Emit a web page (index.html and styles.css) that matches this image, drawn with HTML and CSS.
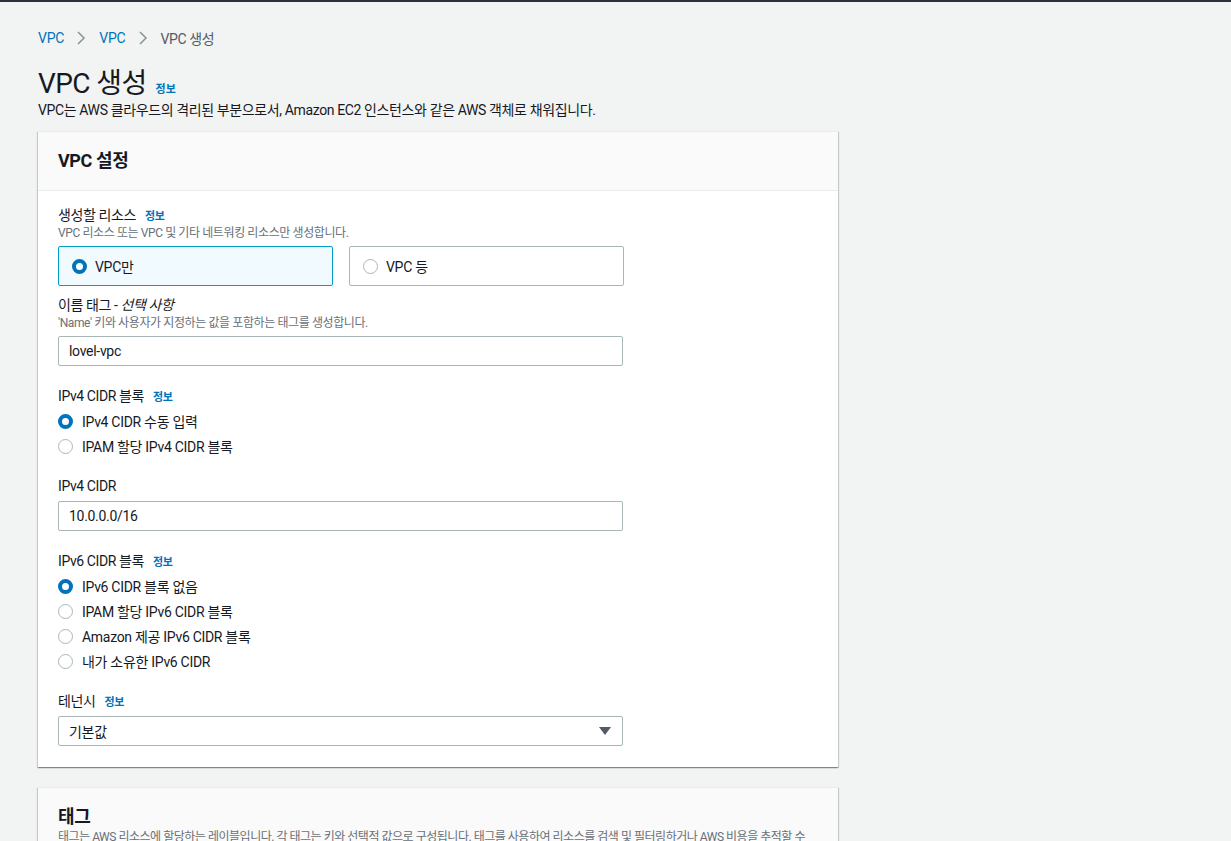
FILE: index.html
```html
<!DOCTYPE html>
<html lang="ko">
<head>
<meta charset="utf-8">
<title>VPC 생성</title>
<link rel="stylesheet" href="styles.css">
</head>
<body>
<div class="topbar"></div>
<main class="page">
  <nav class="crumbs">
    <a class="crumb-link">VPC</a>
    <svg class="chev" width="10" height="16" viewBox="0 0 10 16"><path d="M2 2l6 6-6 6" fill="none" stroke="#879596" stroke-width="1.5"/></svg>
    <a class="crumb-link">VPC</a>
    <svg class="chev" width="10" height="16" viewBox="0 0 10 16"><path d="M2 2l6 6-6 6" fill="none" stroke="#879596" stroke-width="1.5"/></svg>
    <span class="crumb-current">VPC 생성</span>
  </nav>
  <div class="title-row">
    <h1 class="title">VPC 생성</h1>
    <a class="info">정보</a>
  </div>
  <p class="page-desc">VPC는 AWS 클라우드의 격리된 부분으로서, Amazon EC2 인스턴스와 같은 AWS 객체로 채워집니다.</p>

  <section class="card">
    <div class="card-head"><h2 class="card-title">VPC 설정</h2></div>
    <div class="card-body">
      <div class="field field-first">
        <div class="label">생성할 리소스 <a class="info">정보</a></div>
        <div class="desc">VPC 리소스 또는 VPC 및 기타 네트워킹 리소스만 생성합니다.</div>
        <div class="tiles">
          <div class="tile tile-on"><span class="radio radio-on"></span><span>VPC만</span></div>
          <div class="tile"><span class="radio"></span><span>VPC 등</span></div>
        </div>
      </div>
      <div class="field field-tight">
        <div class="label">이름 태그 - <em>선택 사항</em></div>
        <div class="desc">'Name' 키와 사용자가 지정하는 값을 포함하는 태그를 생성합니다.</div>
        <div class="input">lovel-vpc</div>
      </div>
      <div class="field">
        <div class="label">IPv4 CIDR 블록 <a class="info">정보</a></div>
        <div class="radios">
          <div class="opt"><span class="radio radio-on"></span><span>IPv4 CIDR 수동 입력</span></div>
          <div class="opt"><span class="radio"></span><span>IPAM 할당 IPv4 CIDR 블록</span></div>
        </div>
      </div>
      <div class="field">
        <div class="label">IPv4 CIDR</div>
        <div class="input">10.0.0.0/16</div>
      </div>
      <div class="field">
        <div class="label">IPv6 CIDR 블록 <a class="info">정보</a></div>
        <div class="radios">
          <div class="opt"><span class="radio radio-on"></span><span>IPv6 CIDR 블록 없음</span></div>
          <div class="opt"><span class="radio"></span><span>IPAM 할당 IPv6 CIDR 블록</span></div>
          <div class="opt"><span class="radio"></span><span>Amazon 제공 IPv6 CIDR 블록</span></div>
          <div class="opt"><span class="radio"></span><span>내가 소유한 IPv6 CIDR</span></div>
        </div>
      </div>
      <div class="field">
        <div class="label">테넌시 <a class="info">정보</a></div>
        <div class="input select"><span>기본값</span>
          <svg class="caret" width="12" height="8" viewBox="0 0 12 8"><path d="M0 0h12L6 8z" fill="#545b64"/></svg>
        </div>
      </div>
    </div>
  </section>

  <section class="card card-tags">
    <div class="card-head2">
      <h2 class="card-title">태그</h2>
      <div class="desc tag-desc">태그는 AWS 리소스에 할당하는 레이블입니다. 각 태그는 키와 선택적 값으로 구성됩니다. 태그를 사용하여 리소스를 검색 및 필터링하거나 AWS 비용을 추적할 수 있습니다.</div>
    </div>
  </section>
</main>
</body>
</html>
```
FILE: styles.css
```css
* { box-sizing: border-box; }
html, body { margin: 0; padding: 0; }
body {
  background: #f2f3f3;
  color: #16191f;
  font-family: Roboto, "Noto Sans CJK KR", sans-serif;
  font-size: 14px;
  overflow: hidden;
  height: 841px;
}
.topbar { height: 2px; background: #2a323d; }
.page { padding: 0 0 0 38px; width: 838px; box-sizing: content-box; }
.crumbs { display: flex; align-items: center; height: 20px; margin-top: 26px; }
.crumb-link { color: #0073bb; letter-spacing: -0.2px; }
.chev { margin: 0 13px 0 12px; }
.crumb-current { color: #545b64; letter-spacing: -0.4px; }
.title-row { display: flex; align-items: baseline; margin-top: 21px; height: 30px; }
.title { font-size: 28px; font-weight: 400; margin: 0; line-height: 30px; letter-spacing: -0.6px; }
.info { color: #0073bb; font-size: 11px; font-weight: 700; margin-left: 9px; line-height: 1; }
.page-desc { margin: 0; margin-top: 1px; line-height: 20px; letter-spacing: -0.38px; }
.card {
  margin-top: 11px;
  width: 800px;
  background: #fff;
  border-top: 1px solid #eaeded;
  box-shadow: 0 1px 1px 0 rgba(0,28,36,.3), 1px 1px 1px 0 rgba(0,28,36,.15), -1px 1px 1px 0 rgba(0,28,36,.15);
}
.card-head { background: #fafafa; border-bottom: 1px solid #eaeded; padding: 19px 20px 19px; }
.card-title { margin: 0; font-size: 18px; font-weight: 700; line-height: 20px; letter-spacing: -0.4px; }
.card-body { padding: 14px 20px 21px; }
.field { margin-top: 20px; }
.field-first { margin-top: 0; }
.field-tight { margin-top: 9px; }
.label { line-height: 20px; letter-spacing: -0.4px; }
.label .info { margin-left: 6px; }
.label em { font-style: italic; }
.desc { font-size: 12px; line-height: 16px; color: #687078; letter-spacing: -0.4px; }
.tiles { display: flex; gap: 16px; margin-top: 5px; }
.tile {
  width: 275px; height: 40px;
  border: 1px solid #aab7b8; border-radius: 2px;
  display: flex; align-items: center; gap: 8px; padding-left: 13px;
  letter-spacing: -0.3px;
}
.tile-on { background: #f1faff; border-color: #00a1c9; }
.radio {
  width: 15px; height: 15px; border-radius: 50%;
  border: 1px solid #aab7b8; background: #fff; flex: none;
}
.radio-on { border: 4.5px solid #0073bb; }
.radios { margin-top: 5px; display: flex; flex-direction: column; gap: 5px; }
.opt { display: flex; align-items: center; gap: 9px; height: 20px; letter-spacing: -0.3px; }
.input {
  margin-top: 5px; width: 565px; height: 30px;
  border: 1px solid #aab7b8; border-radius: 2px;
  display: flex; align-items: center; padding: 0 11px 0 10px;
  letter-spacing: -0.3px;
}
.select { justify-content: space-between; }
.card-tags { margin-top: 20px; }
.card-head2 { background: #fafafa; padding: 19px 20px 20px; }
.tag-desc { margin-top: 2px; letter-spacing: -0.48px; }
```
